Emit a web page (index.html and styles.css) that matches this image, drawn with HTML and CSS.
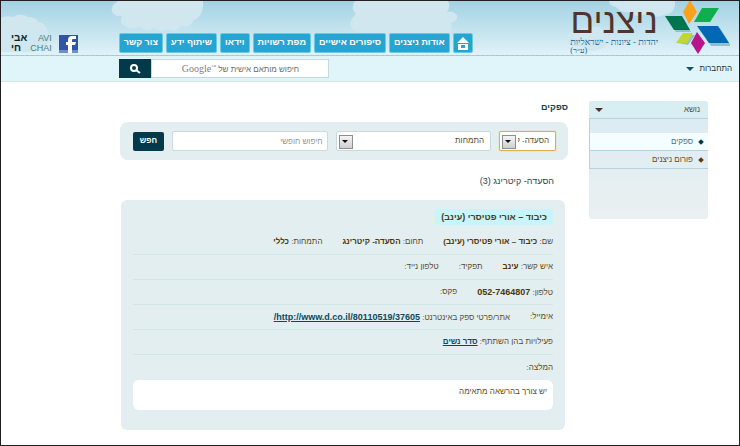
FILE: index.html
```html
<!DOCTYPE html>
<html lang="he" dir="rtl">
<head>
<meta charset="utf-8">
<title>ניצנים - ספקים</title>
<link rel="stylesheet" href="styles.css">
</head>
<body>
<header class="header">
  <svg class="clouds" width="738" height="54" viewBox="1 1 738 54" aria-hidden="true">
    <g fill="#d0e7f0">
      <path d="M1 18Q7 15 13 17Q20 12 28 17Q36 17 38 22Q46 23 47 30Q51 38 46 45Q40 53 26 52H1Z"/>
      <path d="M118 1Q110 6 112 12Q115 17 122 16Q118 23 126 27Q134 30 140 27Q147 33 154 28Q161 33 168 29Q176 33 181 26Q191 28 193 21Q204 16 203 1Z"/>
      <path d="M355 1Q350 8 356 14Q347 22 352 29Q358 35 380 33H450Q453 28 451 23Q459 20 457 15Q453 11 447 12Q451 6 448 1Z"/>
      <path d="M609 1Q609 6 616 7Q620 13 628 12Q636 19 646 14Q656 19 664 15Q674 14 675 5V1Z"/>
      <path d="M569 33Q574 30 578 32Q583 26 590 28Q598 24 604 31Q610 34 607 40Q607 48 597 50Q588 53 583 47Q568 47 567 40Z"/>
    </g>
  </svg>
  <a class="logo" href="#">
    <svg class="logo-mark" width="66" height="54" viewBox="664 1 66 54" aria-hidden="true">
      <path fill="#8fbfd3" d="M667 19H684L691 32H676ZM699 28H720L731 46H711ZM678 43L685 35H695L688 45Z"/>
      <path fill="#faa21b" d="M690 0L697 12L689 24L683 12Z"/>
      <path fill="#0fae4e" d="M702 8H719L710 22H694Z"/>
      <path fill="#00734f" d="M665 16H682L690 30H674Z"/>
      <path fill="#0068b3" d="M697 26H718L729 43H709Z"/>
      <path fill="#bfd730" d="M683 33H693L687 43H676Z"/>
      <path fill="#b5168b" d="M697 32L705 43L698 54L691 43Z"/>
    </svg>
    <span class="logo-text">
      <span class="logo-name">ניצנים</span>
      <span class="logo-tag">יהדות - ציונות - ישראליות</span>
      <span class="logo-reg">(ע״ר)</span>
    </span>
  </a>
  <nav class="nav">
    <a class="nav-link nav-home" href="#" aria-label="דף הבית">
      <svg width="12" height="13" viewBox="0 0 12 13" aria-hidden="true">
        <path fill="#fff" fill-rule="evenodd" d="M6 0L12 6H0ZM1 7H11V13H1ZM4 8V11H8V8Z"/>
      </svg>
    </a>
    <a class="nav-link" href="#">אודות ניצנים</a>
    <a class="nav-link" href="#">סיפורים אישיים</a>
    <a class="nav-link" href="#">מפת רשויות</a>
    <a class="nav-link" href="#">וידאו</a>
    <a class="nav-link" href="#">שיתוף ידע</a>
    <a class="nav-link" href="#">צור קשר</a>
  </nav>
  <div class="partners">
    <a class="facebook" href="#" aria-label="פייסבוק">
      <svg width="19" height="18" viewBox="0 0 19 18" aria-hidden="true">
        <path fill="#2f55a4" d="M0 0H19V18H0Z"/>
        <path fill="#6f8fc8" d="M0 15H19V18H0Z"/>
        <path fill="#fff" d="M9 18V10H7V7H9V5Q9 1 13 1H17V4H14Q13 4 13 5V7H17L16 10H13V18Z"/>
      </svg>
    </a>
    <a class="avichai" href="#">
      <span class="avichai-he"><span>אבי</span><span>חי</span></span>
      <span class="avichai-en"><span>AVI</span><span>CHAI</span></span>
    </a>
  </div>
</header>

<div class="toolbar">
  <button class="login" type="button">התחברות<span class="triangle"></span></button>
  <form class="site-search">
    <label class="site-field">
      <input type="text" aria-label="חיפוש באתר">
      <span class="site-hint">חיפוש מותאם אישית של <span class="google">Google<sup>™</sup></span></span>
    </label>
    <button class="site-go" type="button" aria-label="חפש באתר">
      <svg width="11" height="10" viewBox="0 0 11 10" aria-hidden="true">
        <circle cx="4" cy="4" r="3" fill="none" stroke="#fff" stroke-width="2"/>
        <path d="M6 6L10 9" stroke="#fff" stroke-width="2"/>
      </svg>
    </button>
  </form>
</div>

<div class="page">
  <aside class="sidebar">
    <button class="side-head" type="button">נושא<span class="triangle"></span></button>
    <ul class="side-list">
      <li><a class="side-link active" href="#">ספקים</a></li>
      <li><a class="side-link" href="#">פורום ניצנים</a></li>
    </ul>
  </aside>
  <main class="content">
    <h1 class="title">ספקים</h1>
    <form class="filters">
      <span class="pick pick-topic">
        <select aria-label="תחום"><option>הסעדה- קיטרינג</option></select>
      </span>
      <span class="pick pick-skill">
        <select aria-label="התמחות"><option>התמחות</option></select>
      </span>
      <input class="free" type="text" placeholder="חיפוש חופשי" aria-label="חיפוש חופשי">
      <button class="submit" type="button">חפש</button>
    </form>
    <h2 class="subtitle">הסעדה- קיטרינג (3)</h2>
    <article class="card">
      <h3 class="card-title">כיבוד – אורי פטיסרי (עינב)</h3>
      <div class="row">
        <span>שם: <b>כיבוד – אורי פטיסרי (עינב)</b></span>
        <span>תחום: <b>הסעדה- קיטרינג</b></span>
        <span>התמחות: <b>כללי</b></span>
      </div>
      <div class="row">
        <span>איש קשר: <b>עינב</b></span>
        <span>תפקיד:</span>
        <span>טלפון נייד:</span>
      </div>
      <div class="row">
        <span>טלפון: <b class="latin">052-7464807</b></span>
        <span>פקס:</span>
      </div>
      <div class="row">
        <span>אימייל:</span>
        <span>אתר/פרטי ספק באינטרנט: <a class="latin" href="#">http://www.d.co.il/80110519/37605/</a></span>
      </div>
      <div class="row">
        <span>פעילויות בהן השתתף: <a href="#">סדר נשים</a></span>
      </div>
      <div class="row">
        <span>המלצה:</span>
      </div>
      <p class="note">יש צורך בהרשאה מתאימה</p>
    </article>
  </main>
</div>
</body>
</html>
```
FILE: styles.css
```css
* { box-sizing: border-box; }

body {
  margin: 0;
  min-height: 100vh;
  border: 1px solid #231f20;
  background: #fff;
  color: #5d4a27;
  font: 8px/14px "Liberation Sans", Arial, sans-serif;
}

a { text-decoration: none; color: inherit; }
button, input, select { font: inherit; color: inherit; margin: 0; }
button { border: 0; padding: 0; background: none; cursor: pointer; }

.header {
  position: relative;
  display: flex;
  height: 55px;
  padding: 0 9px 0 10px;
  background: linear-gradient(#a3d2e3, #e0f2f8);
  border-bottom: 1px dashed #a9c6cd;
}
.clouds { position: absolute; top: 0; left: 0; }

.logo { position: relative; display: flex; gap: 6px; }
.logo-mark { display: block; }
.logo-text { display: flex; flex-direction: column; padding-top: 2px; color: #0a5f96; }
.logo-name {
  color: #4f352b;
  font-size: 35px;
  line-height: 35px;
}
.logo-tag { font: 9px/9px "Liberation Serif", serif; }
.logo-reg { font: 8px/8px "Liberation Serif", serif; text-align: left; }

.nav {
  position: relative;
  display: flex;
  align-items: flex-end;
  gap: 3px;
  margin-inline: auto 41px;
  padding-bottom: 2px;
}
.nav-link {
  height: 20px;
  padding: 0 4px;
  border: 1px solid #6cc9e6;
  border-radius: 2px;
  background: #27a5d2;
  color: #fff;
  font-size: 9px;
  font-weight: bold;
  line-height: 17px;
  white-space: nowrap;
}
.nav-home { display: flex; align-items: center; padding: 0 3px; }

.partners { position: relative; display: flex; gap: 7px; align-items: flex-end; padding-bottom: 2px; }
.facebook svg { display: block; }
.avichai { display: flex; gap: 3px; direction: ltr; font-size: 9px; line-height: 10px; }
.avichai span span { display: block; }
.avichai-he { color: #10241f; font-size: 10px; font-weight: bold; }
.avichai-en { color: #4f7a73; text-align: right; }

.toolbar {
  display: flex;
  justify-content: space-between;
  align-items: center;
  height: 26px;
  padding: 0 7px 0 118px;
  background: #e0f5fa;
  border-bottom: 1px solid #d8e6ea;
}
.login { display: flex; align-items: center; gap: 5px; color: #20303a; }
.triangle {
  border: 4px solid transparent;
  border-top: 4px solid #17506b;
  border-bottom: 0;
}
.site-search { display: flex; width: 210px; height: 19px; }
.site-field { position: relative; flex: 1; }
.site-field input {
  display: block;
  width: 100%;
  height: 100%;
  border: 1px solid #c8d9dd;
  background: #fff;
}
.site-hint {
  position: absolute;
  inset: 0 30px auto auto;
  line-height: 19px;
  white-space: nowrap;
  color: #6b6b6b;
}
.google { direction: ltr; unicode-bidi: isolate; font: 10px/19px "Liberation Serif", serif; color: #808080; }
.google sup { font-size: 5px; line-height: 0; }
.site-go { display: flex; align-items: center; justify-content: center; width: 32px; background: #023a4b; }

.page { display: flex; gap: 21px; align-items: flex-start; padding: 19px 31px 12px 119px; }

.sidebar {
  width: 119px;
  min-height: 118px;
  border-radius: 3px;
  background: linear-gradient(#d9ebf3, #ebf0f1);
}
.side-head {
  display: flex;
  justify-content: space-between;
  align-items: center;
  width: 100%;
  height: 18px;
  padding: 0 8px 0 6px;
  border-bottom: 1px solid #b2d4df;
  border-radius: 3px 3px 0 0;
  background: #d8eef3;
}
.side-head .triangle { border-top-color: #45302b; }
.side-list { list-style: none; margin: 0; padding: 14px 0 0; border-left: 1px solid #b2d4df; }
.side-link {
  display: flex;
  align-items: center;
  gap: 6px;
  height: 18px;
  padding-right: 5px;
  border-bottom: 1px solid #b2d4df;
}
.side-link::before { content: ""; width: 4px; height: 4px; background: #5b3a10; transform: rotate(45deg); }
.side-link.active { background: #f4fdff; color: #31788f; }
.side-link.active::before { background: #023a4b; }

.content { flex: 1; min-width: 0; }
.title { margin: 0 0 9px; font-size: 9px; line-height: 12px; color: #143f4f; }

.filters {
  display: flex;
  gap: 8px;
  align-items: center;
  height: 38px;
  padding: 0 12px 0 13px;
  border-radius: 8px;
  background: #e2eef0;
}
.pick { position: relative; height: 20px; }
.pick select {
  appearance: none;
  display: block;
  width: 100%;
  height: 100%;
  padding: 0 6px 0 18px;
  border: 1px solid #cbd9dc;
  border-radius: 2px;
  background: #fff;
}
.pick::before {
  content: "";
  position: absolute;
  left: 3px;
  top: 4px;
  width: 12px;
  height: 12px;
  border: 1px solid #8a8f91;
  background: linear-gradient(#f5f5f5, #cfcfcf);
}
.pick::after {
  content: "";
  position: absolute;
  left: 6px;
  top: 9px;
  border: 3px solid transparent;
  border-top-color: #111;
  border-bottom: 0;
}
.pick-topic { width: 57px; }
.pick-topic select { border: 1px solid #e0ae50; box-shadow: 0 0 1px #e0ae50; }
.pick-skill { flex: 1 1 150px; }
.free {
  flex: 1 1 150px;
  min-width: 0;
  height: 20px;
  padding: 0 4px;
  border: 1px solid #cbd9dc;
  border-radius: 2px;
  background: #fff;
}
.free::placeholder { color: #8d9496; opacity: 1; }
.submit { width: 31px; height: 19px; border-radius: 2px; background: #023a4b; color: #fff; font-weight: bold; }

.subtitle { margin: 14px 14px 12px; font-size: 9px; line-height: 14px; font-weight: normal; color: #2c4550; }

.card { margin: 0 3px 0 1px; padding: 9px 12px 20px; border-radius: 6px; background: #e2eef0; }
.card-title {
  width: fit-content;
  margin: 0 0 5px;
  padding: 0 6px;
  border-radius: 3px;
  background: #c8f5fc;
  color: #4d3c15;
  font-size: 9px;
  line-height: 16px;
}
.row {
  display: flex;
  gap: 20px;
  height: 25px;
  align-items: center;
  border-bottom: 1px solid #d2e6e8;
}
.row:last-of-type { border-bottom: 0; }
.row b { color: #4d3608; }
.row a { color: #0d4a5f; font-weight: bold; text-decoration: underline; }
.row .latin { font-size: 9px; }
.note { margin: 0; min-height: 30px; padding: 5px 6px; border-radius: 6px; background: #fff; }
```
